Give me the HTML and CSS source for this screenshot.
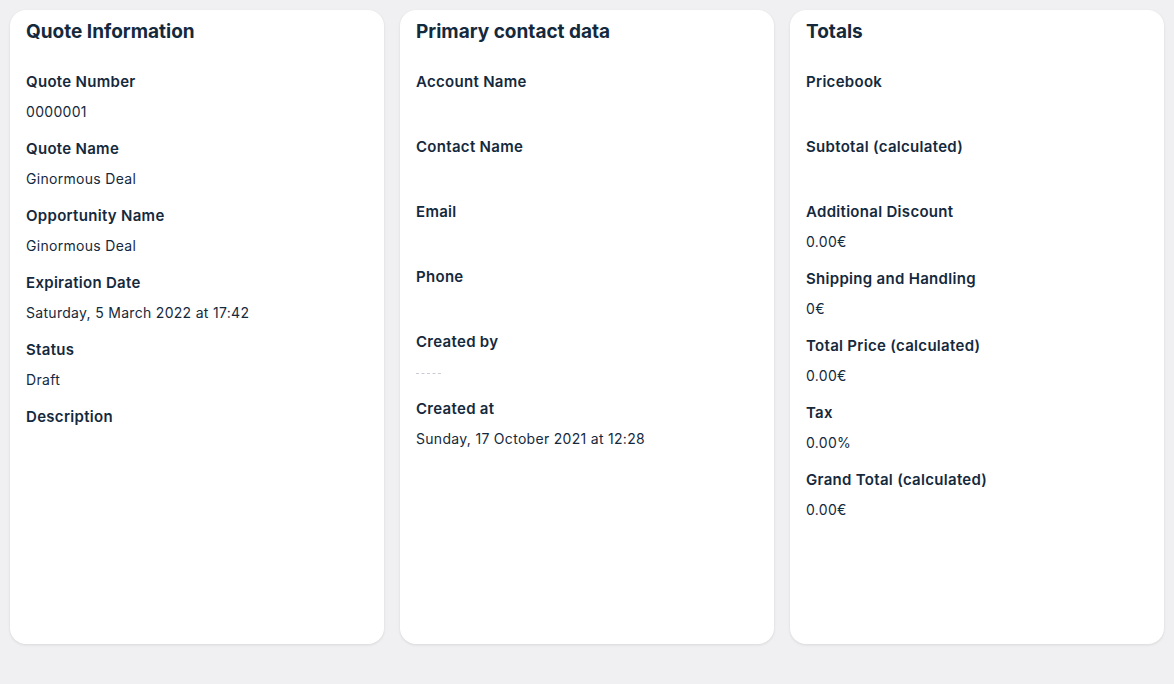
FILE: index.html
```html
<!DOCTYPE html>
<html>
<head>
<meta charset="utf-8">
<link rel="stylesheet" href="styles.css">
</head>
<body>
<div class="grid">
  <section class="card">
    <h2 class="title">Quote Information</h2>
    <div class="field"><div class="label">Quote Number</div><div class="value">0000001</div></div>
    <div class="field"><div class="label">Quote Name</div><div class="value">Ginormous Deal</div></div>
    <div class="field"><div class="label">Opportunity Name</div><div class="value">Ginormous Deal</div></div>
    <div class="field"><div class="label">Expiration Date</div><div class="value">Saturday, 5 March 2022 at 17:42</div></div>
    <div class="field"><div class="label">Status</div><div class="value">Draft</div></div>
    <div class="field"><div class="label">Description</div><div class="value"></div></div>
  </section>
  <section class="card">
    <h2 class="title">Primary contact data</h2>
    <div class="field"><div class="label">Account Name</div><div class="value"></div></div>
    <div class="field"><div class="label">Contact Name</div><div class="value"></div></div>
    <div class="field"><div class="label">Email</div><div class="value"></div></div>
    <div class="field"><div class="label">Phone</div><div class="value"></div></div>
    <div class="field"><div class="label">Created by</div><div class="value"><span class="faint"></span></div></div>
    <div class="field"><div class="label">Created at</div><div class="value">Sunday, 17 October 2021 at 12:28</div></div>
  </section>
  <section class="card">
    <h2 class="title">Totals</h2>
    <div class="field"><div class="label">Pricebook</div><div class="value"></div></div>
    <div class="field"><div class="label">Subtotal (calculated)</div><div class="value"></div></div>
    <div class="field"><div class="label">Additional Discount</div><div class="value">0.00€</div></div>
    <div class="field"><div class="label">Shipping and Handling</div><div class="value">0€</div></div>
    <div class="field"><div class="label">Total Price (calculated)</div><div class="value">0.00€</div></div>
    <div class="field"><div class="label">Tax</div><div class="value">0.00%</div></div>
    <div class="field"><div class="label">Grand Total (calculated)</div><div class="value">0.00€</div></div>
  </section>
</div>
</body>
</html>
```
FILE: styles.css
```css
html, body {
  margin: 0;
  padding: 0;
  background: #f0f0f2;
}
body {
  font-family: Inter, "Open Sans", sans-serif;
  color: #15293d;
}
.grid {
  display: grid;
  grid-template-columns: repeat(3, 374px);
  gap: 16px;
  padding: 10px;
}
.card {
  background: #ffffff;
  border-radius: 16px;
  height: 634px;
  box-sizing: border-box;
  padding: 10px 16px;
  box-shadow: 0 1px 3px rgba(0, 0, 0, 0.10);
}
.title {
  margin: 0 0 27px;
  font-size: 19px;
  line-height: 24px;
  font-weight: 700;
}
.field {
  margin-bottom: 16px;
}
.label {
  font-size: 15px;
  line-height: 21px;
  font-weight: 600;
  letter-spacing: 0.3px;
  margin-bottom: 9px;
}
.value {
  font-size: 14px;
  line-height: 21px;
  min-height: 19px;
  font-weight: 400;
  letter-spacing: 0.3px;
}
.faint {
  display: inline-block;
  width: 25px;
  height: 0;
  border-top: 1px dashed #c9ccd2;
  vertical-align: top;
  margin-top: 12px;
}
```
